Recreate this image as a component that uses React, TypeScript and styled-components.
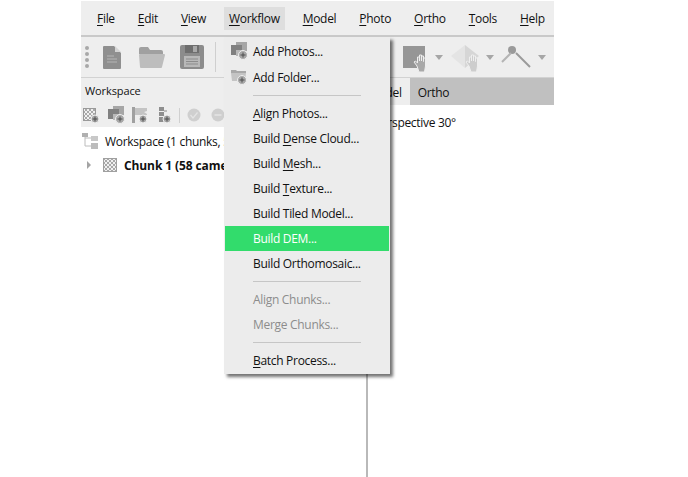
import React from 'react';
import styled, { createGlobalStyle } from 'styled-components';

const GlobalStyle = createGlobalStyle`
    html, body {
        margin: 0;
        padding: 0;
        background: #ffffff;
    }
    body {
        font-family: 'Open Sans', 'Noto Sans', sans-serif;
        font-size: 12px;
        letter-spacing: -0.3px;
        color: #111111;
    }
`;

const Page = styled.div`
    width: 688px;
    height: 477px;
    padding: 1px 134px 0 81px;
    box-sizing: border-box;
    overflow: hidden;
`;

const Frame = styled.div`
    position: relative;
    height: 476px;
    display: flex;
    flex-direction: column;
`;

const MenuBar = styled.div`
    height: 34px;
    flex: none;
    display: flex;
    align-items: center;
    padding: 0 4.5px;
    background: #eeeeee;
    border-bottom: 2px solid #c9c9c9;
`;

const MenuTitle = styled.div<{ $open?: boolean }>`
    height: 23px;
    line-height: 23px;
    padding: 0 5px;
    margin: 0 6.5px;
    white-space: nowrap;
    background: ${(p) => (p.$open ? '#dedede' : 'transparent')};
`;

const Key = styled.span`
    text-decoration: underline;
    text-underline-offset: 2px;
`;

const ToolBar = styled.div`
    height: 40px;
    flex: none;
    display: flex;
    align-items: center;
    justify-content: space-between;
    padding: 0 8px 0 3px;
    background: #eeeeee;
    border-bottom: 1px solid #d2d2d2;
`;

const ToolGroup = styled.div`
    display: flex;
    align-items: center;
`;

const ToolSeparator = styled.div`
    width: 1px;
    height: 30px;
    margin-left: 11px;
    background: #cfcfcf;
`;

const Body = styled.div`
    flex: 1;
    min-height: 0;
    display: flex;
`;

const WorkspacePanel = styled.div`
    width: 285px;
    flex: none;
    display: flex;
    flex-direction: column;
    background: #ffffff;
`;

const PanelHead = styled.div`
    height: 49px;
    flex: none;
    background: #eeeeee;
`;

const PanelTitle = styled.div`
    height: 25px;
    line-height: 25px;
    padding-left: 4px;
    font-size: 11px;
    letter-spacing: -0.1px;
`;

const MiniBar = styled.div`
    height: 24px;
    display: flex;
    align-items: center;
    padding-left: 2px;
`;

const MiniSeparator = styled.div`
    width: 1px;
    height: 15px;
    margin: 0 7px;
    background: #d0d0d0;
`;

const Tree = styled.div`
    padding-top: 2px;
`;

const TreeRow = styled.div<{ $indent: number; $bold?: boolean }>`
    height: 24px;
    display: flex;
    align-items: center;
    gap: 7px;
    padding-left: ${(p) => p.$indent}px;
    font-weight: ${(p) => (p.$bold ? 700 : 400)};
    letter-spacing: ${(p) => (p.$bold ? '-0.1px' : '-0.3px')};
    white-space: nowrap;

    svg {
        flex: none;
    }
`;

const ViewPane = styled.div`
    flex: 1;
    display: flex;
    flex-direction: column;
    border-left: 2px solid #b9b9b9;
`;

const TabBar = styled.div`
    height: 27px;
    flex: none;
    display: flex;
    margin-left: -2px;
    background: #c0c0c0;
`;

const Tab = styled.div<{ $active?: boolean }>`
    display: flex;
    align-items: center;
    padding: 2px 8px 0 ${(p) => (p.$active ? 2 : 8)}px;
    background: ${(p) => (p.$active ? '#eeeeee' : 'transparent')};
`;

const ViewLabel = styled.div`
    padding: 9px 0 0 6px;
    white-space: nowrap;
`;

const DropMenu = styled.div`
    position: absolute;
    left: 143px;
    top: 36px;
    width: 166px;
    box-sizing: border-box;
    padding: 1px;
    background: #ececec;
    box-shadow: 3px 3px 3px rgba(0, 0, 0, 0.55);
`;

const MenuRow = styled.div<{ $tall?: boolean; $selected?: boolean; $disabled?: boolean }>`
    height: ${(p) => (p.$tall ? 26 : 25)}px;
    display: flex;
    align-items: center;
    padding-left: 6px;
    white-space: nowrap;
    background: ${(p) => (p.$selected ? '#32dc6c' : 'transparent')};
    color: ${(p) => (p.$selected ? '#ffffff' : p.$disabled ? '#8c8c8c' : '#111111')};
`;

const MenuIcon = styled.div`
    width: 22px;
    flex: none;
    display: flex;
    align-items: center;
`;

const MenuDivider = styled.div<{ $space: number }>`
    height: 1px;
    margin: ${(p) => p.$space}px 28px ${(p) => p.$space}px 28px;
    background: #c6c6c6;
`;

const PlusBadge: React.FC<{ cx: number; cy: number; r?: number }> = ({ cx, cy, r = 4.5 }) => (
    <>
        <circle cx={cx} cy={cy} r={r} fill="#a8a8a8" stroke="#eeeeee" strokeWidth="1" />
        <path d={`M${cx - 2.5} ${cy}h5M${cx} ${cy - 2.5}v5`} stroke="#4c4c4c" strokeWidth="1" />
    </>
);

const Grip = () => (
    <svg width="6" height="24" viewBox="0 0 6 24" style={{ marginRight: 13 }}>
        {[3, 9, 15, 21].map((y) => (
            <circle key={y} cx="3" cy={y} r="2" fill="#a8a8a8" />
        ))}
    </svg>
);

const DocIcon = () => (
    <svg width="18" height="23" viewBox="0 0 18 23">
        <path d="M1 0h10l7 7v15a1 1 0 0 1-1 1H1a1 1 0 0 1-1-1V1a1 1 0 0 1 1-1z" fill="#8f8f8f" />
        <path d="M12 0l6 6h-6z" fill="#d4d4d4" />
        <path d="M4 10h7M4 13h10M4 16h10" stroke="#b5b5b5" strokeWidth="1" />
    </svg>
);

const FolderIcon = () => (
    <svg width="26" height="21" viewBox="0 0 26 21" style={{ marginLeft: 18 }}>
        <path d="M0 2a2 2 0 0 1 2-2h7l2 3h11a2 2 0 0 1 2 2v2H0z" fill="#a0a0a0" />
        <path d="M1 7h24a1 1 0 0 1 1 1l-3 12a1 1 0 0 1-1 1H2a1 1 0 0 1-1-1L0 8a1 1 0 0 1 1-1z" fill="#bdbdbd" />
    </svg>
);

const FloppyIcon = () => (
    <svg width="24" height="24" viewBox="0 0 24 24" style={{ marginLeft: 15 }}>
        <rect width="24" height="24" rx="2" fill="#8c8c8c" />
        <rect x="5" y="0" width="14" height="8" fill="#6e6e6e" />
        <rect x="13" y="1" width="4" height="6" fill="#a8a8a8" />
        <rect x="4" y="11" width="16" height="11" fill="#b8b8b8" />
        <path d="M6 14h12M6 16.5h12M6 19h12" stroke="#8c8c8c" strokeWidth="1" />
    </svg>
);

const Caret: React.FC<{ gap: number }> = ({ gap }) => (
    <svg width="8" height="5" viewBox="0 0 8 5" style={{ marginLeft: gap }}>
        <path d="M0 0h8L4 5z" fill="#a6a6a6" />
    </svg>
);

const Hand: React.FC<{ x: number; y: number; fill: string }> = ({ x, y, fill }) => (
    <g transform={`translate(${x} ${y})`}>
        <path
            d="M3 11L0 7l1.500-1 2 2V2h2v4V0h2v6V1h2v5.500V3h2v8l-1 6H5z"
            fill={fill}
            stroke="#eeeeee"
            strokeWidth="1"
        />
    </g>
);

const SquareHandIcon = () => (
    <svg width="28" height="30" viewBox="0 0 28 30">
        <rect x="0" y="4" width="22" height="22" fill="#969696" />
        <Hand x={11} y={13} fill="#a9a9a9" />
    </svg>
);

const DiamondHandIcon = () => (
    <svg width="29" height="30" viewBox="0 0 29 30" style={{ marginLeft: 8 }}>
        <path d="M14 3v23L0 14z" fill="#e4e4e4" />
        <path d="M14 3l14 11-14 12z" fill="#d6d6d6" />
        <Hand x={15} y={13} fill="#cdcdcd" />
    </svg>
);

const NodesIcon = () => (
    <svg width="30" height="22" viewBox="0 0 30 22" style={{ marginLeft: 7 }}>
        <circle cx="11" cy="4" r="4" fill="#9a9a9a" />
        <path d="M1 16L10 7" stroke="#b4b4b4" strokeWidth="2" />
        <path d="M15 7l14 14" stroke="#9a9a9a" strokeWidth="2" />
    </svg>
);

const CheckerDefs = () => (
    <defs>
        <pattern id="checker" width="4" height="4" patternUnits="userSpaceOnUse">
            <rect width="4" height="4" fill="#f0f0f0" />
            <rect width="2" height="2" fill="#a8a8a8" />
            <rect x="2" y="2" width="2" height="2" fill="#a8a8a8" />
        </pattern>
    </defs>
);

const AddChunkIcon = () => (
    <svg width="17" height="17" viewBox="0 0 17 17">
        <CheckerDefs />
        <rect x="0.500" y="1.500" width="12" height="12" fill="url(#checker)" stroke="#9a9a9a" />
        <PlusBadge cx={12} cy={12} r={4} />
    </svg>
);

const AddPhotosIcon: React.FC<{ style?: React.CSSProperties }> = ({ style }) => (
    <svg width="17" height="18" viewBox="0 0 17 18" style={style}>
        <rect x="5" y="0" width="11" height="9" fill="#a6a6a6" />
        <rect x="0" y="3" width="11" height="10" fill="#808080" />
        <rect x="5" y="8" width="6" height="6" fill="#b8b8b8" />
        <PlusBadge cx={12} cy={13} />
    </svg>
);

const AddFolderIcon = () => (
    <svg width="16" height="16" viewBox="0 0 16 16">
        <path d="M0 1h5l1 1h9v2H0z" fill="#a9a9a9" />
        <path d="M0 4h15l-1 8H1z" fill="#c4c4c4" />
        <PlusBadge cx={11} cy={11} />
    </svg>
);

const AddFlagIcon = () => (
    <svg width="17" height="17" viewBox="0 0 17 17" style={{ marginLeft: 7 }}>
        <rect x="0" y="0" width="3" height="16" fill="#a0a0a0" />
        <path d="M3 1h12v3l-3 1 3 2v1H3z" fill="#c4c4c4" />
        <PlusBadge cx={11} cy={12} r={4} />
    </svg>
);

const AddListIcon = () => (
    <svg width="13" height="17" viewBox="0 0 13 17" style={{ marginLeft: 10 }}>
        <path d="M0 0h5v4H0zM0 5h5v4H0zM0 10h5v5H0z" fill="#8e8e8e" />
        <path d="M5 3h3v2H5z" fill="#bcbcbc" />
        <PlusBadge cx={8} cy={12} r={4} />
    </svg>
);

const CheckIcon = () => (
    <svg width="14" height="14" viewBox="0 0 14 14">
        <circle cx="7" cy="7" r="6.500" fill="#cfcfcf" />
        <path d="M3.500 7l2.500 3 4.500-5.500" fill="none" stroke="#e4e4e4" strokeWidth="1.200" />
    </svg>
);

const MinusIcon = () => (
    <svg width="14" height="14" viewBox="0 0 14 14" style={{ marginLeft: 10 }}>
        <circle cx="7" cy="7" r="6.500" fill="#cfcfcf" />
        <path d="M3.500 7h7" stroke="#e4e4e4" strokeWidth="1.500" />
    </svg>
);

const WorkspaceTreeIcon = () => (
    <svg width="16" height="16" viewBox="0 0 16 16">
        <rect x="0" y="0" width="6" height="4" fill="#b0b0b0" />
        <rect x="9" y="3" width="7" height="5" fill="#c8c8c8" />
        <rect x="9" y="10" width="7" height="6" fill="#bcbcbc" />
        <path d="M3 4v9h6M3 5h6" fill="none" stroke="#bcbcbc" strokeWidth="1" />
    </svg>
);

const TreeArrow = () => (
    <svg width="4" height="8" viewBox="0 0 4 8">
        <path d="M0 0l4 4-4 4z" fill="#a4a4a4" />
    </svg>
);

const ChunkIcon = () => (
    <svg width="14" height="14" viewBox="0 0 14 14" style={{ marginLeft: 5 }}>
        <CheckerDefs />
        <rect x="0.500" y="0.500" width="13" height="13" fill="url(#checker)" stroke="#a0a0a0" />
    </svg>
);

const App: React.FC = () => {
    return (
        <Page>
            <GlobalStyle />
            <Frame>
                <MenuBar>
                    <MenuTitle><Key>F</Key>ile</MenuTitle>
                    <MenuTitle><Key>E</Key>dit</MenuTitle>
                    <MenuTitle><Key>V</Key>iew</MenuTitle>
                    <MenuTitle $open><Key>W</Key>orkflow</MenuTitle>
                    <MenuTitle><Key>M</Key>odel</MenuTitle>
                    <MenuTitle><Key>P</Key>hoto</MenuTitle>
                    <MenuTitle><Key>O</Key>rtho</MenuTitle>
                    <MenuTitle><Key>T</Key>ools</MenuTitle>
                    <MenuTitle><Key>H</Key>elp</MenuTitle>
                </MenuBar>
                <ToolBar>
                    <ToolGroup>
                        <Grip />
                        <DocIcon />
                        <FolderIcon />
                        <FloppyIcon />
                        <ToolSeparator />
                    </ToolGroup>
                    <ToolGroup>
                        <SquareHandIcon />
                        <Caret gap={4} />
                        <DiamondHandIcon />
                        <Caret gap={6} />
                        <NodesIcon />
                        <Caret gap={7} />
                    </ToolGroup>
                </ToolBar>
                <Body>
                    <WorkspacePanel>
                        <PanelHead>
                            <PanelTitle>Workspace</PanelTitle>
                            <MiniBar>
                                <AddChunkIcon />
                                <AddPhotosIcon style={{ marginLeft: 8 }} />
                                <AddFlagIcon />
                                <AddListIcon />
                                <MiniSeparator />
                                <CheckIcon />
                                <MinusIcon />
                            </MiniBar>
                        </PanelHead>
                        <Tree>
                            <TreeRow $indent={1}>
                                <WorkspaceTreeIcon />
                                <span>Workspace (1 chunks, 5</span>
                            </TreeRow>
                            <TreeRow $indent={6} $bold>
                                <TreeArrow />
                                <ChunkIcon />
                                <span>Chunk 1 (58 came</span>
                            </TreeRow>
                        </Tree>
                    </WorkspacePanel>
                    <ViewPane>
                        <TabBar>
                            <Tab $active>Model</Tab>
                            <Tab>Ortho</Tab>
                        </TabBar>
                        <ViewLabel>Perspective 30°</ViewLabel>
                    </ViewPane>
                </Body>
                <DropMenu>
                    <MenuRow $tall><MenuIcon><AddPhotosIcon /></MenuIcon>Add Photos...</MenuRow>
                    <MenuRow $tall><MenuIcon><AddFolderIcon /></MenuIcon>Add Folder...</MenuRow>
                    <MenuDivider $space={5} />
                    <MenuRow><MenuIcon /><span><Key>A</Key>lign Photos...</span></MenuRow>
                    <MenuRow><MenuIcon /><span>Build <Key>D</Key>ense Cloud...</span></MenuRow>
                    <MenuRow><MenuIcon /><span>Build <Key>M</Key>esh...</span></MenuRow>
                    <MenuRow><MenuIcon /><span>Build <Key>T</Key>exture...</span></MenuRow>
                    <MenuRow><MenuIcon />Build Tiled Model...</MenuRow>
                    <MenuRow $selected><MenuIcon />Build DEM...</MenuRow>
                    <MenuRow><MenuIcon />Build Orthomosaic...</MenuRow>
                    <MenuDivider $space={5} />
                    <MenuRow $disabled><MenuIcon />Align Chunks...</MenuRow>
                    <MenuRow $disabled><MenuIcon />Merge Chunks...</MenuRow>
                    <MenuDivider $space={5} />
                    <MenuRow><MenuIcon /><span><Key>B</Key>atch Process...</span></MenuRow>
                </DropMenu>
            </Frame>
        </Page>
    );
};

export default App;
